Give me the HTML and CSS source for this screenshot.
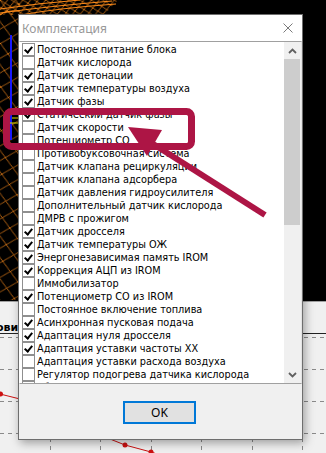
FILE: index.html
```html
<!DOCTYPE html>
<html>
<head>
<meta charset="utf-8">
<link rel="stylesheet" href="styles.css">
</head>
<body>
<div class="desk">
  <svg class="bg" width="326" height="453" viewBox="0 0 326 453">
    <defs>
      <pattern id="mesh" width="19" height="17" patternUnits="userSpaceOnUse" patternTransform="rotate(12)">
        <path d="M0 0L19 17M19 0L0 17" stroke="#ff8c1a" stroke-width="0.7" fill="none"/>
      </pattern>
      <pattern id="mesh2" width="9" height="8" patternUnits="userSpaceOnUse" patternTransform="rotate(-10)">
        <path d="M0 0L9 8M9 0L0 8" stroke="#ff8c1a" stroke-width="0.7" fill="none"/>
      </pattern>
    </defs>
    <rect x="0" y="0" width="326" height="301" fill="#000"/>
    <rect x="0" y="0" width="20" height="300" fill="url(#mesh)"/>
    <path d="M0 0H118L104 15H0Z" fill="url(#mesh2)"/>
    <path d="M0 13Q50 6 112 1M0 9Q40 3 80 0M20 15Q60 8 116 4M0 15Q5 10 20 11" stroke="#ff8c1a" stroke-width="1" fill="none"/>
    <rect x="10" y="35" width="2" height="105" fill="#1a1aff"/>
    <path d="M10 123H19M12 118H18" stroke="#e8e800" stroke-width="1"/>
    <rect x="0" y="301" width="326" height="152" fill="#f0f0f0"/>
    <rect x="0" y="301" width="326" height="1" fill="#a0a0a0"/>
    <rect x="0" y="333" width="326" height="1" fill="#222"/>
    <g stroke="#8a8a8a" stroke-width="1" stroke-dasharray="4 4" fill="none">
      <path d="M0 337.5H326M0 369.5H326M0 401.5H326M0 433.5H326"/>
      <path d="M50.5 334V453M100.5 334V453M151.5 334V453M201.5 334V453M252.5 334V453M302.5 334V453"/>
    </g>
    <g stroke="#cc1111" stroke-width="1" fill="none">
      <path d="M0 394L20 399"/>
      <path d="M105 437L125 445L151 452L160 455"/>
    </g>
    <g fill="#cc1111">
      <circle cx="0.5" cy="394" r="2.5"/>
      <circle cx="125" cy="445" r="2.5"/>
      <circle cx="151" cy="452" r="2.5"/>
    </g>
    <text x="-4" y="331" class="bgtext">ови</text>
  </svg>

  <div class="dialog">
    <div class="titlebar">
      <span class="title">Комплектация</span>
      <svg class="close" width="10" height="10" viewBox="0 0 10 10"><path d="M0.5 0.5L9.5 9.5M9.5 0.5L0.5 9.5" stroke="#7a7a7a" stroke-width="1" fill="none"/></svg>
    </div>
    <div class="listbox">
      <ul class="items">
        <li class="row on"><span class="cb"></span><span class="lbl">Постоянное питание блока</span></li>
        <li class="row"><span class="cb"></span><span class="lbl">Датчик кислорода</span></li>
        <li class="row on"><span class="cb"></span><span class="lbl">Датчик детонации</span></li>
        <li class="row on"><span class="cb"></span><span class="lbl">Датчик температуры воздуха</span></li>
        <li class="row on"><span class="cb"></span><span class="lbl">Датчик фазы</span></li>
        <li class="row on"><span class="cb"></span><span class="lbl">Статический датчик фазы</span></li>
        <li class="row"><span class="cb"></span><span class="lbl">Датчик скорости</span></li>
        <li class="row"><span class="cb"></span><span class="lbl">Потенциометр СО</span></li>
        <li class="row"><span class="cb"></span><span class="lbl">Противобуксовочная система</span></li>
        <li class="row"><span class="cb"></span><span class="lbl">Датчик клапана рециркуляции</span></li>
        <li class="row"><span class="cb"></span><span class="lbl">Датчик клапана адсорбера</span></li>
        <li class="row"><span class="cb"></span><span class="lbl">Датчик давления гидроусилителя</span></li>
        <li class="row"><span class="cb"></span><span class="lbl">Дополнительный датчик кислорода</span></li>
        <li class="row"><span class="cb"></span><span class="lbl">ДМРВ с прожигом</span></li>
        <li class="row on"><span class="cb"></span><span class="lbl">Датчик дросселя</span></li>
        <li class="row on"><span class="cb"></span><span class="lbl">Датчик температуры ОЖ</span></li>
        <li class="row on"><span class="cb"></span><span class="lbl">Энергонезависимая память IROM</span></li>
        <li class="row on"><span class="cb"></span><span class="lbl">Коррекция АЦП из IROM</span></li>
        <li class="row"><span class="cb"></span><span class="lbl">Иммобилизатор</span></li>
        <li class="row on"><span class="cb"></span><span class="lbl">Потенциометр СО из IROM</span></li>
        <li class="row"><span class="cb"></span><span class="lbl">Постоянное включение топлива</span></li>
        <li class="row on"><span class="cb"></span><span class="lbl">Асинхронная пусковая подача</span></li>
        <li class="row on"><span class="cb"></span><span class="lbl">Адаптация нуля дросселя</span></li>
        <li class="row on"><span class="cb"></span><span class="lbl">Адаптация уставки частоты ХХ</span></li>
        <li class="row"><span class="cb"></span><span class="lbl">Адаптация уставки расхода воздуха</span></li>
        <li class="row"><span class="cb"></span><span class="lbl">Регулятор подогрева датчика кислорода</span></li>
        <li class="row"><span class="cb"></span><span class="lbl">Сброс адаптации</span></li>
      </ul>
      <div class="scrollbar">
        <div class="sbtn"><svg width="9" height="6" viewBox="0 0 9 6"><path d="M1 5L4.5 1.5L8 5" stroke="#606060" stroke-width="1.8" fill="none"/></svg></div>
        <div class="track"><div class="thumb"></div></div>
        <div class="sbtn"><svg width="9" height="6" viewBox="0 0 9 6"><path d="M1 1L4.5 4.5L8 1" stroke="#606060" stroke-width="1.8" fill="none"/></svg></div>
      </div>
    </div>
    <div class="footer">
      <button class="ok">OK</button>
    </div>
  </div>

  <svg class="annot" width="326" height="453" viewBox="0 0 326 453">
    <rect x="6.5" y="111.5" width="185" height="35" rx="5" ry="5" fill="none" stroke="#ad1545" stroke-width="7"/>
    <path d="M265 215L150 142" stroke="#ad1545" stroke-width="6" fill="none"/>
    <path d="M128 127L162 130L147 156Z" fill="#ad1545"/>
  </svg>
</div>
</body>
</html>
```

FILE: styles.css
```css
* { box-sizing: border-box; }
html, body { margin: 0; padding: 0; }
body { width: 326px; height: 453px; overflow: hidden; background: #000; }

.desk { position: relative; width: 326px; height: 453px; overflow: hidden; }
.bg { position: absolute; left: 0; top: 0; }
.bgtext { font-family: "DejaVu Sans", sans-serif; font-weight: bold; font-size: 11px; fill: #000; }

.dialog {
  position: absolute;
  left: 18px;
  top: 14px;
  width: 285px;
  height: 426px;
  border: 1px solid #6e6e6e;
  background: #f0f0f0;
  display: flex;
  flex-direction: column;
  box-shadow: 2px 3px 9px rgba(0, 0, 0, 0.35);
}

.titlebar {
  height: 26px;
  flex: none;
  background: #fff;
  display: flex;
  align-items: center;
  justify-content: space-between;
  padding: 0 9px 0 3px;
}
.title {
  font-family: "Noto Sans", "Open Sans", sans-serif;
  font-size: 12px;
  color: #999;
}
.close { display: block; }

.listbox {
  height: 343px;
  flex: none;
  display: flex;
  background: #fff;
  border: 1px solid #a0a0a0;
  border-left-color: #fff;
  border-right-color: #e3e3e3;
}
.items {
  list-style: none;
  margin: 0;
  padding: 1px 0 0 2px;
  flex: 1;
  overflow: hidden;
}
.row {
  height: 13px;
  display: flex;
  align-items: center;
  gap: 2px;
  white-space: nowrap;
}
.cb {
  width: 13px;
  height: 13px;
  flex: none;
  border: 1px solid #8f8f8f;
  background: #fff;
  position: relative;
}
.row.on .cb::after {
  content: "";
  position: absolute;
  left: 2px;
  top: 0px;
  width: 3px;
  height: 6px;
  border-right: 2px solid #000;
  border-bottom: 2px solid #000;
  transform: translate(1px, 1px) rotate(40deg);
}
.lbl {
  font-family: "DejaVu Sans Condensed", "DejaVu Sans", sans-serif;
  font-size: 10.8px;
  color: #000;
  line-height: 13px;
}

.scrollbar {
  width: 17px;
  flex: none;
  display: flex;
  flex-direction: column;
  background: #f0f0f0;
}
.sbtn {
  height: 17px;
  flex: none;
  display: flex;
  align-items: center;
  justify-content: center;
}
.track { flex: 1; padding: 0 1px 0 0; }
.thumb { height: 166px; background: #cdcdcd; }

.footer {
  flex: 1;
  display: flex;
  justify-content: center;
  align-items: flex-start;
  padding-top: 17px;
}
.ok {
  width: 73px;
  height: 23px;
  margin-left: -2px;
  border: 2px solid #0078d7;
  background: #e1e1e1;
  font-family: "Noto Sans", "Open Sans", sans-serif;
  font-size: 12px;
  color: #000;
  padding: 0;
}

.annot { position: absolute; left: 0; top: 0; pointer-events: none; }
```
